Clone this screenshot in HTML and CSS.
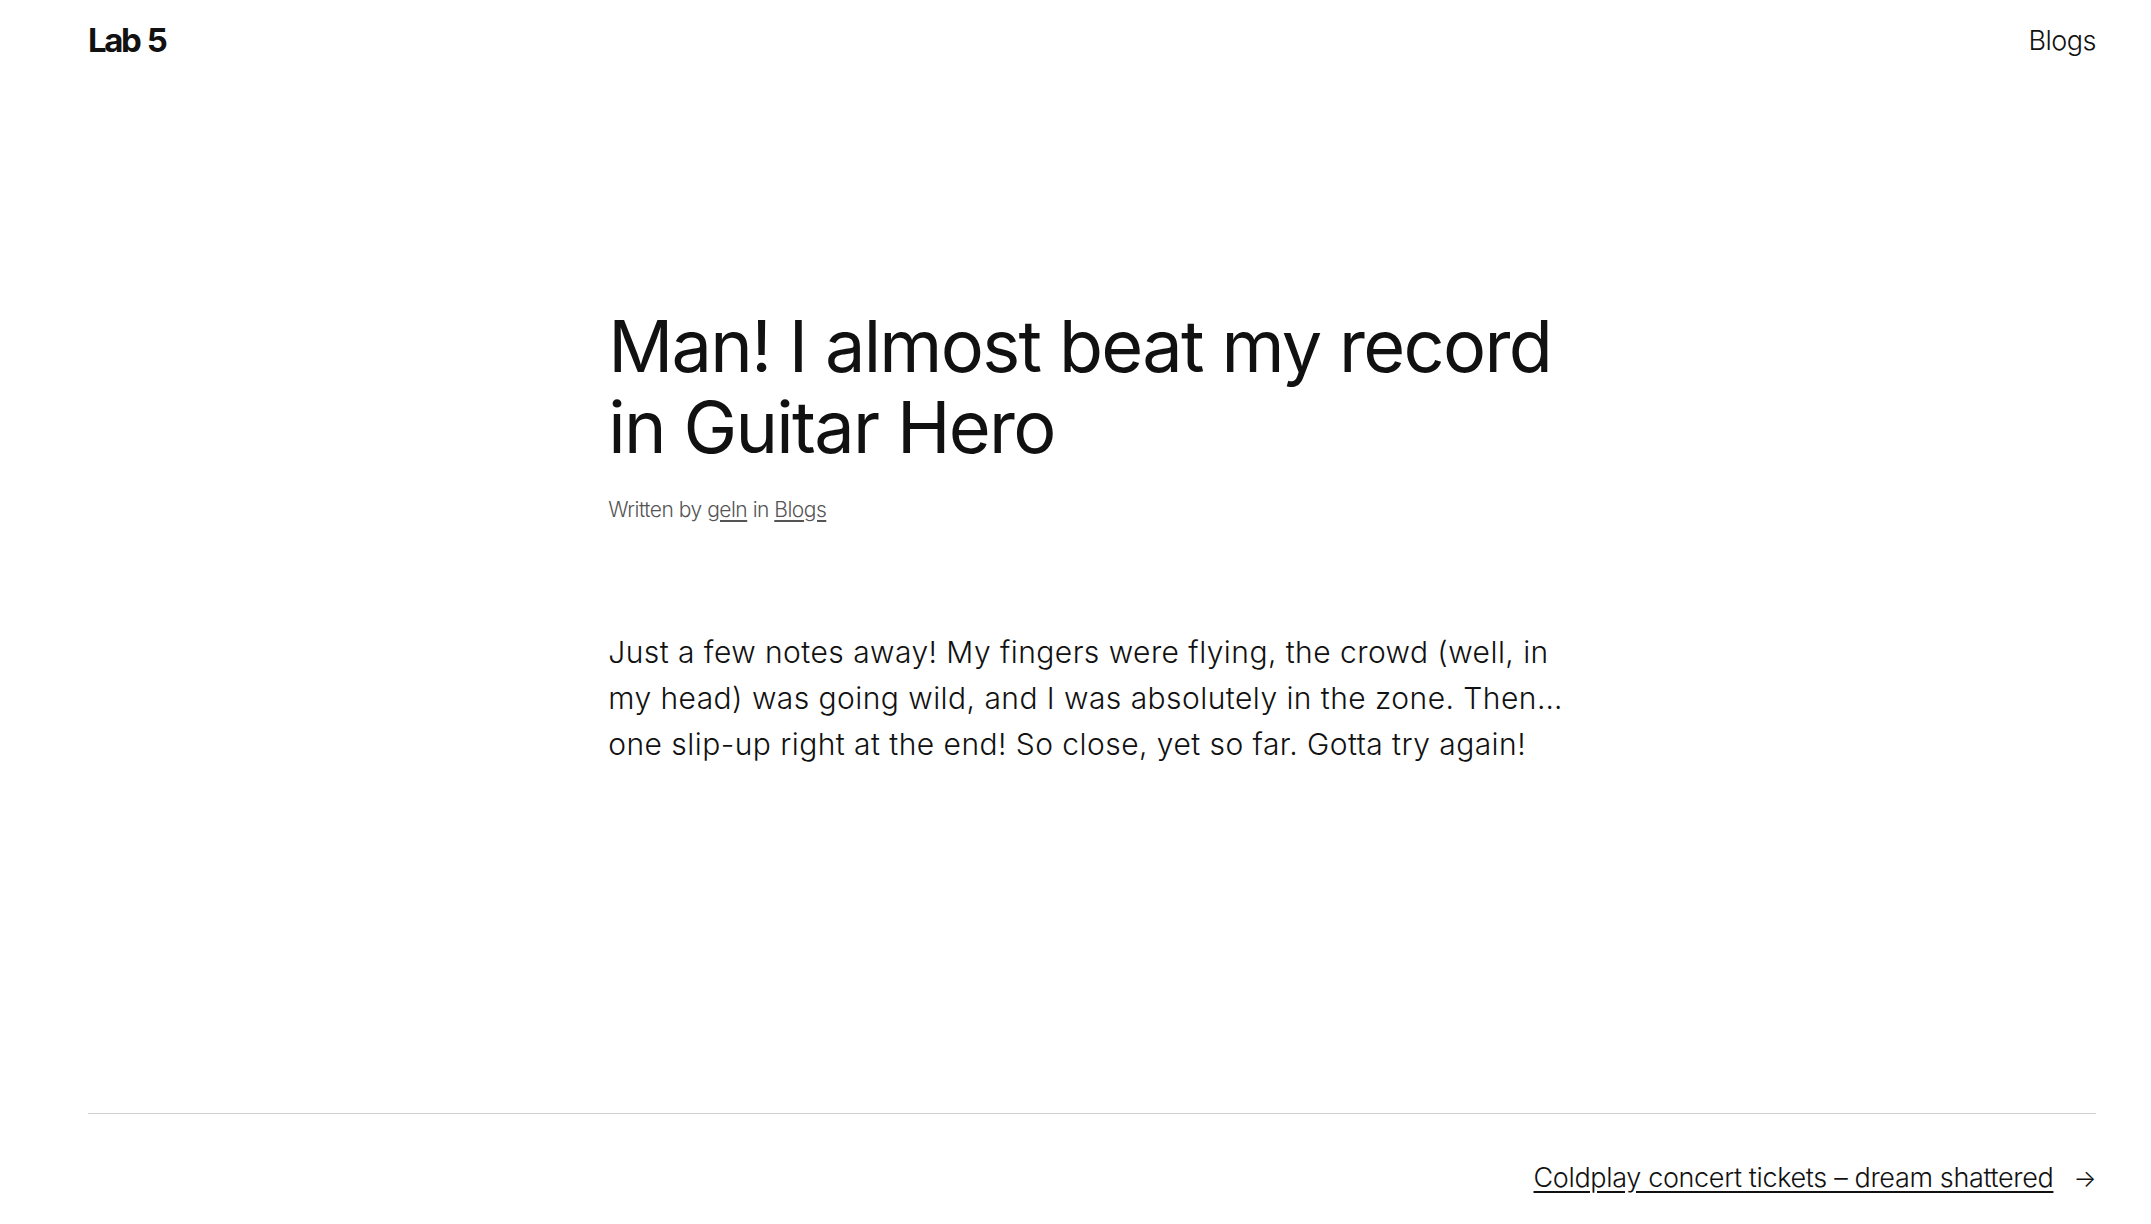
FILE: index.html
```html
<!DOCTYPE html>
<html lang="en">
<head>
<meta charset="utf-8">
<title>Man! I almost beat my record in Guitar Hero – Lab 5</title>
<link rel="stylesheet" href="styles.css">
</head>
<body>
<header class="site-header">
  <a class="site-title" href="#">Lab 5</a>
  <nav class="site-nav"><a href="#">Blogs</a></nav>
</header>
<main class="post">
  <h1 class="post-title">Man! I almost beat my record in Guitar Hero</h1>
  <p class="post-meta">Written by <a href="#">geln</a> in <a href="#">Blogs</a></p>
  <div class="post-content">
    <p>Just a few notes away! My fingers were flying, the crowd (well, in my head) was going wild, and I was absolutely in the zone. Then… one slip-up right at the end! So close, yet so far. Gotta try again!</p>
  </div>
</main>
<footer class="post-nav">
  <div class="post-nav-inner">
    <a class="next-link" href="#">Coldplay concert tickets – dream shattered</a>
    <span class="arrow">→</span>
  </div>
</footer>
</body>
</html>
```
FILE: styles.css
```css
html, body {
  margin: 0;
  padding: 0;
  background: #fff;
}
body {
  font-family: Inter, "Noto Sans", sans-serif;
  color: #111;
  min-height: 100vh;
  display: flex;
  flex-direction: column;
  padding: 0 55px 0 88px;
  box-sizing: border-box;
}
a {
  color: inherit;
}
.site-header {
  display: flex;
  justify-content: space-between;
  align-items: center;
  padding-top: 21px;
}
.site-title {
  font-size: 33px;
  font-weight: 700;
  line-height: 1.2;
  text-decoration: none;
  letter-spacing: -2.4px;
  word-spacing: 2px;
}
.site-nav a {
  font-size: 27px;
  line-height: 1.2;
  font-weight: 300;
  text-decoration: none;
  letter-spacing: -0.5px;
}
.post {
  flex: 1;
  width: 967.5px;
  margin: 0 auto;
}
.post-title {
  margin: 244.7px 0 0;
  font-size: 72px;
  line-height: 81px;
  font-weight: 400;
  letter-spacing: -1.7px;
}
.post-meta {
  margin: 26.3px 0 0;
  font-size: 21px;
  line-height: 31.5px;
  font-weight: 300;
  color: #555;
  letter-spacing: -0.5px;
}
.post-meta a {
  color: #555;
  text-underline-offset: 3px;
}
.post-content p {
  margin: 103.7px 0 0;
  font-size: 30px;
  line-height: 46px;
  font-weight: 300;
  letter-spacing: 0.45px;
}
.post-nav {
  border-top: 1px solid #d0d0d0;
  padding: 48px 0 30px;
}
.post-nav-inner {
  display: flex;
  justify-content: flex-end;
  align-items: baseline;
  gap: 20px;
  font-size: 27px;
  line-height: 1.2;
  font-weight: 300;
  letter-spacing: -0.35px;
}
.next-link {
  text-underline-offset: 4px;
}
.arrow {
  font-size: 24px;
}
```
